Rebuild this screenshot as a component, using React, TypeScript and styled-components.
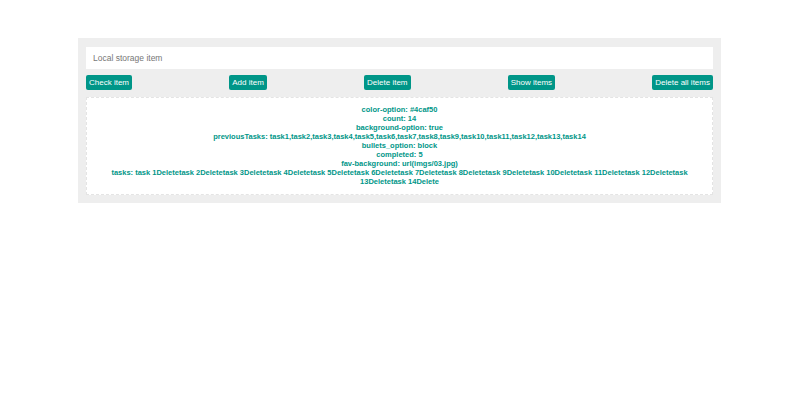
import React from "react";
import styled, { createGlobalStyle } from "styled-components";

const Global = createGlobalStyle`
  html, body { margin: 0; padding: 0; background: #fff; }
  body { font-family: "Liberation Sans", Arial, sans-serif; }
`;

const Page = styled.div`
  width: 800px;
  height: 400px;
  padding-top: 38px;
  box-sizing: border-box;
`;

const Container = styled.div`
  margin-left: 78px;
  width: 643px;
  background: #eeeeee;
  padding: 9px 8px 8px;
  box-sizing: border-box;
  display: flex;
  flex-direction: column;
`;

const Input = styled.input`
  height: 22px;
  border: none;
  outline: none;
  background: #fff;
  padding: 0 7px;
  font-family: "Liberation Sans", Arial, sans-serif;
  font-size: 8.5px;
  color: #333;
  box-sizing: border-box;
  &::placeholder { color: #777; }
`;

const Buttons = styled.div`
  display: flex;
  justify-content: space-between;
  margin-top: 6px;
`;

const Button = styled.button`
  background: #009688;
  color: #fff;
  border: none;
  border-radius: 2px;
  height: 15px;
  padding: 0 3px;
  font-family: "Liberation Sans", Arial, sans-serif;
  font-size: 8px;
  line-height: 15px;
  cursor: pointer;
`;

const Output = styled.div`
  margin-top: 7px;
  background: #fff;
  border: 1px dashed #e4e4e4;
  padding: 7px 20px 8px;
  min-height: 98px;
  box-sizing: border-box;
  text-align: center;
  color: #009688;
  font-weight: bold;
  font-size: 7.5px;
  line-height: 9px;
`;

const Line = styled.div``;

const lines = [
  "color-option: #4caf50",
  "count: 14",
  "background-option: true",
  "previousTasks: task1,task2,task3,task4,task5,task6,task7,task8,task9,task10,task11,task12,task13,task14",
  "bullets_option: block",
  "completed: 5",
  "fav-background: url(imgs/03.jpg)",
  "tasks: task 1Deletetask 2Deletetask 3Deletetask 4Deletetask 5Deletetask 6Deletetask 7Deletetask 8Deletetask 9Deletetask 10Deletetask 11Deletetask 12Deletetask 13Deletetask 14Delete",
];

export default function App() {
  return (
    <Page>
      <Global />
      <Container>
        <Input placeholder="Local storage item" />
        <Buttons>
          <Button>Check item</Button>
          <Button>Add item</Button>
          <Button>Delete item</Button>
          <Button>Show items</Button>
          <Button>Delete all items</Button>
        </Buttons>
        <Output>
          {lines.map((l) => (
            <Line key={l}>{l}</Line>
          ))}
        </Output>
      </Container>
    </Page>
  );
}
